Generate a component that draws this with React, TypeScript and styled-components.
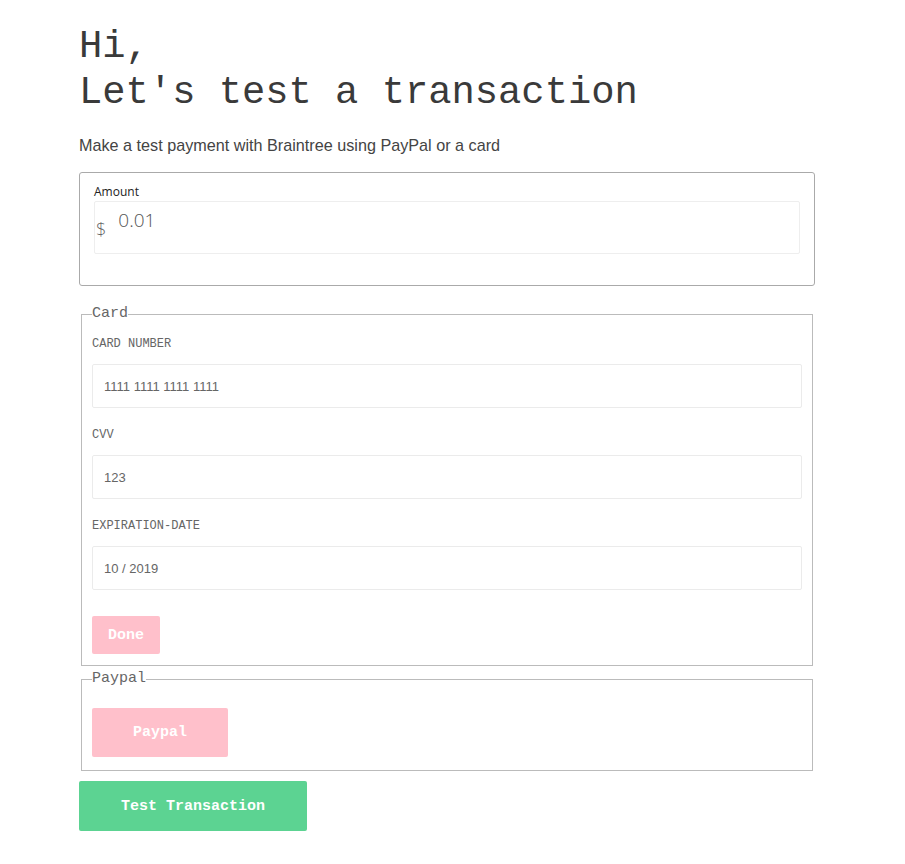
import React from "react";
import styled, { createGlobalStyle } from "styled-components";

const GlobalStyle = createGlobalStyle`
  body {
    margin: 0;
    background: #fff;
    font-family: "Liberation Sans", Arial, sans-serif;
  }
`;

const Container = styled.div`
  width: 736px;
  padding: 24px 0 30px 79px;
`;

const Title = styled.h1`
  margin: 0;
  font-family: "Liberation Mono", "Courier New", monospace;
  font-weight: 400;
  font-size: 38.8px;
  line-height: 46px;
  color: #3a3a3a;
`;

const Subtitle = styled.p`
  margin: 20px 0 0;
  font-size: 16.2px;
  line-height: 18px;
  color: #444;
`;

const AmountBox = styled.div`
  margin-top: 18px;
  border: 1px solid #aaa;
  border-radius: 3px;
  padding: 11px 14px 31px;
`;

const AmountLabel = styled.label`
  display: block;
  margin-bottom: 1px;
  font-family: "Open Sans", sans-serif;
  font-weight: 500;
  font-size: 12px;
  line-height: 16px;
  color: #222;
`;

const AmountField = styled.div`
  display: flex;
  align-items: center;
  height: 51px;
  border: 1px solid #eee;
  border-radius: 2px;
`;

const Currency = styled.span`
  margin-left: 1px;
  margin-top: 2px;
  font-family: "Open Sans", sans-serif;
  font-weight: 300;
  font-size: 18px;
  color: #666;
`;

const AmountInput = styled.input`
  align-self: flex-start;
  margin: 5px 0 0 12px;
  padding: 0;
  border: none;
  outline: none;
  width: 200px;
  font-family: "Open Sans", sans-serif;
  font-weight: 300;
  font-size: 19px;
  line-height: 26px;
  color: #555;
`;

const Fieldset = styled.fieldset<{ $top: number; $padTop: number; $padBottom: number }>`
  margin: ${(p) => p.$top}px 2px 0;
  padding: ${(p) => p.$padTop}px 10px ${(p) => p.$padBottom}px;
  border: 1px solid #bbb;
  min-width: 0;
`;

const Legend = styled.legend`
  padding: 0;
  font-family: "Liberation Mono", "Courier New", monospace;
  font-size: 15px;
  line-height: 16px;
  color: #666;
`;

const Field = styled.div`
  margin-bottom: 20px;
  &:last-of-type {
    margin-bottom: 26px;
  }
`;

const Label = styled.label`
  display: block;
  margin-bottom: 13px;
  font-family: "Liberation Mono", "Courier New", monospace;
  font-size: 12px;
  line-height: 14px;
  color: #666;
`;

const Input = styled.input`
  box-sizing: border-box;
  display: block;
  width: 100%;
  height: 44px;
  padding: 0 11px;
  border: 1px solid #ebebeb;
  border-radius: 2px;
  outline: none;
  font-family: "Liberation Sans", Arial, sans-serif;
  font-size: 13px;
  color: #666;
`;

const Btn = styled.button<{ $bg: string; $w?: number; $h: number }>`
  display: block;
  box-sizing: border-box;
  width: ${(p) => (p.$w ? `${p.$w}px` : "auto")};
  height: ${(p) => p.$h}px;
  padding: 0 16px;
  border: none;
  border-radius: 2px;
  background: ${(p) => p.$bg};
  color: #fff;
  font-family: "Liberation Mono", "Courier New", monospace;
  font-weight: 700;
  font-size: 15px;
  cursor: pointer;
`;

const SubmitRow = styled.div`
  margin-top: 10px;
`;

function App() {
  return (
    <Container>
      <GlobalStyle />
      <Title>
        Hi,
        <br />
        Let's test a transaction
      </Title>
      <Subtitle>Make a test payment with Braintree using PayPal or a card</Subtitle>
      <AmountBox>
        <AmountLabel>Amount</AmountLabel>
        <AmountField>
          <Currency>$</Currency>
          <AmountInput readOnly defaultValue="0.01" />
        </AmountField>
      </AmountBox>
      <Fieldset $top={20} $padTop={15} $padBottom={11}>
        <Legend>Card</Legend>
        <Field>
          <Label>CARD NUMBER</Label>
          <Input readOnly defaultValue="1111 1111 1111 1111" />
        </Field>
        <Field>
          <Label>CVV</Label>
          <Input readOnly defaultValue="123" />
        </Field>
        <Field>
          <Label>EXPIRATION-DATE</Label>
          <Input readOnly defaultValue="10 / 2019" />
        </Field>
        <Btn $bg="#ffc0cb" $h={38}>Done</Btn>
      </Fieldset>
      <Fieldset $top={5} $padTop={21} $padBottom={13}>
        <Legend>Paypal</Legend>
        <Btn $bg="#ffc0cb" $w={136} $h={49}>Paypal</Btn>
      </Fieldset>
      <SubmitRow>
        <Btn $bg="#5cd392" $w={228} $h={50}>Test Transaction</Btn>
      </SubmitRow>
    </Container>
  );
}

export default App;
